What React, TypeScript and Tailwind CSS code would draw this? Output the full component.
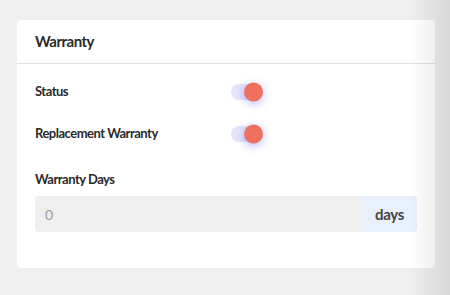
export default function App() {
  return (
    <div className="relative h-[295px] w-[450px] overflow-hidden bg-[#efefef] pl-[17px] pt-[20px] font-['Lato','Liberation_Sans',sans-serif] text-[#2a2a2a]">
      <div className="w-[418px] rounded-[4px] bg-white">
        {/* Header */}
        <div className="flex h-[44px] items-center border-b border-[#dde1e6] px-[18px]">
          <h2 className="text-[15px] font-bold tracking-[-0.5px]">Warranty</h2>
        </div>

        {/* Body */}
        <div className="px-[18px] pb-[36px] pt-[18px]">
          <div className="flex h-[20px] items-center">
            <span className="w-[196px] text-[13px] font-bold tracking-[-0.5px]">Status</span>
            <Toggle />
          </div>
          <div className="mt-[22px] flex h-[20px] items-center">
            <span className="w-[196px] text-[13px] font-bold tracking-[-0.5px]">Replacement Warranty</span>
            <Toggle />
          </div>

          <div className="mt-[27px] h-[16px] text-[13px] leading-[16px] font-bold tracking-[-0.5px]">Warranty Days</div>
          <div className="mt-[9px] flex h-[36px]">
            <input
              defaultValue="0"
              className="h-full w-[327px] rounded-l-[4px] bg-[#efefef] px-[10px] text-[14px] text-[#9a9a9a] outline-none"
            />
            <div className="flex flex-1 items-center justify-center rounded-r-[4px] bg-[#e8f0fb] text-[15px] font-bold tracking-[-0.3px] text-[#444]">
              days
            </div>
          </div>
        </div>
      </div>

      {/* right edge shade */}
      <div className="pointer-events-none absolute inset-y-0 right-0 w-[40px] bg-gradient-to-r from-transparent to-black/10" />
    </div>
  );
}

function Toggle() {
  return (
    <div className="relative h-[16px] w-[29px] rounded-full bg-[#e4e4fb]">
      <div className="absolute right-[-3px] top-1/2 h-[19px] w-[19px] -translate-y-1/2 rounded-full bg-[#f07060] shadow-[0_2px_8px_rgba(90,90,255,0.45)]" />
    </div>
  );
}
